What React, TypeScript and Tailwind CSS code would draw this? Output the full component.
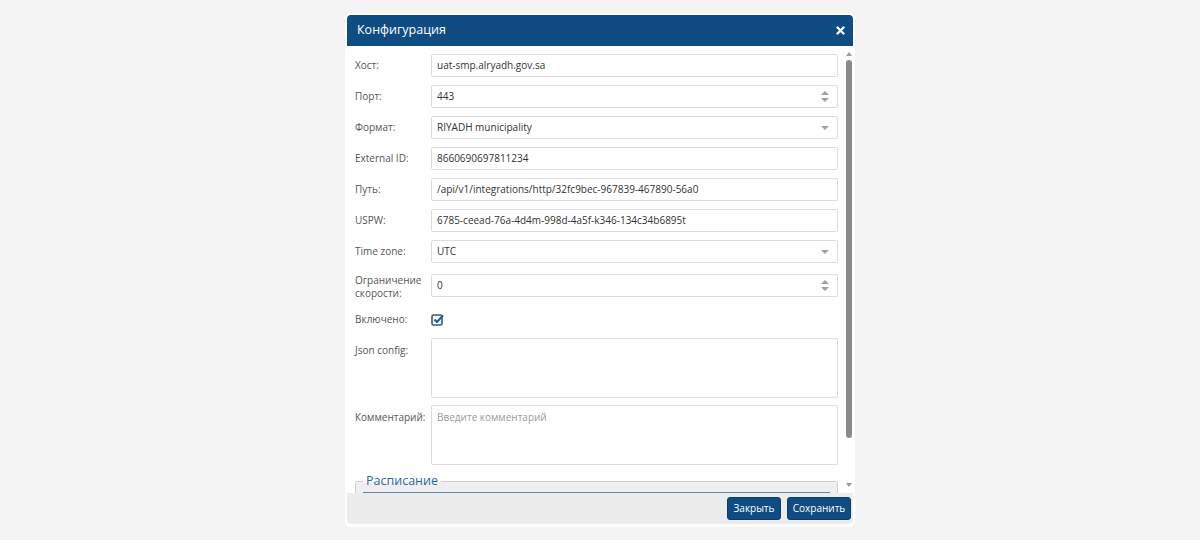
import React from "react";

const Spinner = () => (
  <div className="flex flex-col items-center gap-[3px] pr-[8px]">
    <svg width="8" height="4" viewBox="0 0 8 4">
      <path d="M0 4 L4 0 L8 4 Z" fill="#a0a0a0" />
    </svg>
    <svg width="8" height="4" viewBox="0 0 8 4">
      <path d="M0 0 L4 4 L8 0 Z" fill="#a0a0a0" />
    </svg>
  </div>
);

const Caret = () => (
  <div className="pr-[8px]">
    <svg width="8" height="4" viewBox="0 0 8 4">
      <path d="M0 0 L4 4 L8 0 Z" fill="#a0a0a0" />
    </svg>
  </div>
);

type FieldProps = {
  label: string;
  value: string;
  kind?: "text" | "number" | "select";
};

const Field = ({ label, value, kind = "text" }: FieldProps) => (
  <div className="flex shrink-0 items-center">
    <label className="w-[76px] shrink-0 text-[10px] leading-[13px] text-[#555]">{label}</label>
    <div className="flex h-[23px] flex-1 items-center justify-between rounded-[2px] border border-[#dcdcdc] bg-white pl-[5px] text-[10px] text-[#333]">
      <span>{value}</span>
      {kind === "number" && <Spinner />}
      {kind === "select" && <Caret />}
    </div>
  </div>
);

export default function App() {
  return (
    <div className="flex h-[540px] justify-center bg-[#f4f4f4] pt-[13px] font-['Open_Sans',sans-serif]">
      <div className="flex h-[514px] w-[510px] flex-col rounded-[6px] bg-white p-[2px]">
        {/* header */}
        <div className="flex h-[31px] shrink-0 items-center justify-between rounded-t-[4px] bg-[#0f4c82] pl-[10px] pr-[8px]">
          <span className="text-[12.5px] text-white">Конфигурация</span>
          <svg width="9" height="9" viewBox="0 0 9 9">
            <path d="M1.5 1.5 L7.5 7.5 M7.5 1.5 L1.5 7.5" stroke="#fff" strokeWidth="2.3" strokeLinecap="round" />
          </svg>
        </div>

        {/* body */}
        <div className="flex h-[447px] shrink-0 overflow-hidden">
          <div className="flex flex-1 flex-col gap-2 pl-2 pr-[7px] pt-2">
            <Field label="Хост:" value="uat-smp.alryadh.gov.sa" />
            <Field label="Порт:" value="443" kind="number" />
            <Field label="Формат:" value="RIYADH municipality" kind="select" />
            <Field label="External ID:" value="8660690697811234" />
            <Field label="Путь:" value="/api/v1/integrations/http/32fc9bec-967839-467890-56a0" />
            <Field label="USPW:" value="6785-ceead-76a-4d4m-998d-4a5f-k346-134c34b6895t" />
            <Field label="Time zone:" value="UTC" kind="select" />

            <div className="flex h-[29px] shrink-0 items-start">
              <label className="w-[76px] shrink-0 pt-[3px] text-[10px] leading-[13px] text-[#555]">
                Ограничение скорости:
              </label>
              <div className="mt-[3px] flex h-[23px] flex-1 items-center justify-between rounded-[2px] border border-[#dcdcdc] pl-[5px] text-[10px] text-[#333]">
                <span>0</span>
                <Spinner />
              </div>
            </div>

            <div className="flex h-[22px] shrink-0 items-center">
              <label className="w-[76px] shrink-0 text-[10px] text-[#555]">Включено:</label>
              <svg width="13" height="13" viewBox="0 0 13 13">
                <rect x="1" y="2" width="10" height="10" rx="1.5" fill="none" stroke="#2a5d91" strokeWidth="1.6" />
                <path d="M3.5 6.5 L6 9 L12 2.5" fill="none" stroke="#2a5d91" strokeWidth="2.2" />
              </svg>
            </div>

            <div className="flex shrink-0 items-start">
              <label className="w-[76px] shrink-0 pt-[5px] text-[10px] text-[#555]">Json config:</label>
              <div className="h-[60px] flex-1 rounded-[2px] border border-[#dcdcdc]" />
            </div>

            <div className="mt-[-1px] flex shrink-0 items-start">
              <label className="w-[76px] shrink-0 pt-[5px] text-[10px] text-[#555]">Комментарий:</label>
              <div className="h-[60px] flex-1 rounded-[2px] border border-[#dcdcdc] px-[5px] pt-[4px] text-[10px] text-[#9a9a9a]">
                Введите комментарий
              </div>
            </div>

            <fieldset className="shrink-0 rounded-[2px] border border-[#cfcfcf] px-[7px] pb-2">
              <legend className="px-[3px] text-[12.5px] leading-[16px] text-[#2d68a4]">Расписание</legend>
              <div className="mx-[-7px] mt-[-7px] h-[60px] bg-[#efefef] px-[7px] pt-[10px]">
                <div className="h-[2px] bg-[#5d86b3]" />
              </div>
            </fieldset>
          </div>

          {/* scrollbar */}
          <div className="flex w-[8px] shrink-0 flex-col items-center pt-[6px]">
            <svg width="6" height="4" viewBox="0 0 6 4">
              <path d="M0 4 L3 0 L6 4 Z" fill="#9a9a9a" />
            </svg>
            <div className="mt-[4px] h-[378px] w-[6px] rounded-[3px] bg-[#8a8a8a]" />
            <div className="flex-1" />
            <svg className="mb-[6px]" width="6" height="4" viewBox="0 0 6 4">
              <path d="M0 0 L3 4 L6 0 Z" fill="#9a9a9a" />
            </svg>
          </div>
        </div>

        {/* footer */}
        <div className="flex h-[31px] shrink-0 items-center justify-end gap-[6px] rounded-b-[4px] bg-[#ececec] pr-[2px]">
          <button className="h-[23px] w-[54px] rounded-[3px] border border-[#0b3d6b] bg-[#0f4c82] text-[10px] text-white">
            Закрыть
          </button>
          <button className="h-[23px] w-[64px] rounded-[3px] border border-[#0b3d6b] bg-[#0f4c82] text-[10px] text-white">
            Сохранить
          </button>
        </div>
      </div>
    </div>
  );
}
